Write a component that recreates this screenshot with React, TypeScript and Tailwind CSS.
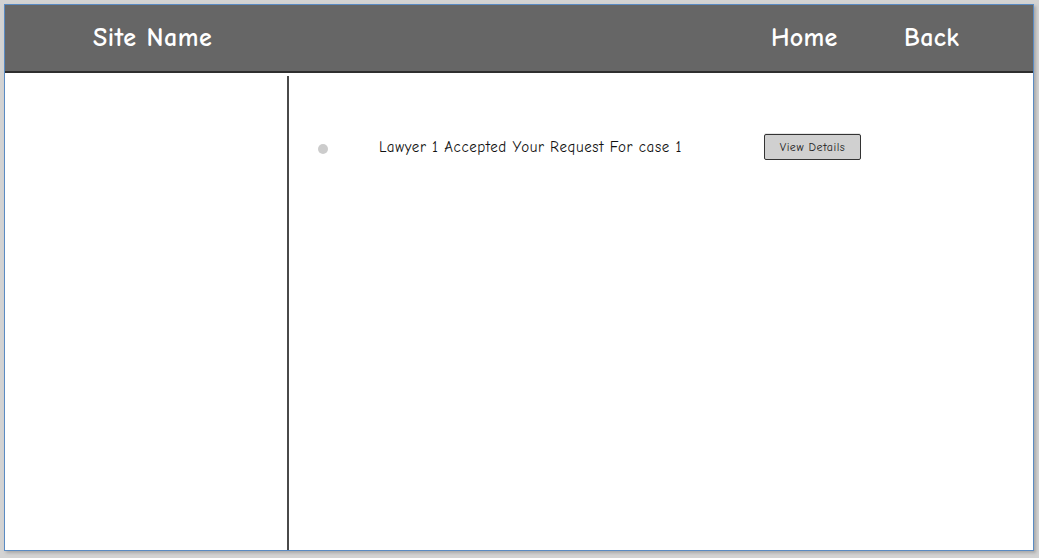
const font = {
  fontFamily: '"Comic Sans MS", "Comic Neue", "Liberation Sans", sans-serif',
};

function Header() {
  return (
    <header className="flex h-[68px] items-center border-b-2 border-[#2e2e2e] bg-[#666666] text-white">
      <div className="w-[766px] pl-[88px] text-[26px] font-semibold tracking-[0.6px]">
        Site Name
      </div>
      <nav className="flex items-center text-[26px] font-semibold tracking-[0.3px]">
        <span className="w-[133px]">Home</span>
        <span>Back</span>
      </nav>
    </header>
  );
}

function Notification() {
  return (
    <div className="flex items-center pt-[58px]">
      <span className="ml-[29px] mt-[3px] size-[10px] rounded-full bg-[#cccccc]" />
      <p className="ml-[51px] w-[385px] text-[15px] tracking-[0.6px] text-[#111111]">
        Lawyer 1 Accepted Your Request For case 1
      </p>
      <button
        type="button"
        className="flex h-[26px] w-[97px] items-center justify-center rounded-[2px] border border-[#333333] bg-[#d0d0d0] text-[12px] tracking-[0.5px] text-[#222222] shadow-[0_-1px_0_#e6e6e6]"
      >
        View Details
      </button>
    </div>
  );
}

export default function App() {
  return (
    <div className="h-[558px] w-[1039px] bg-[#d3d3d3] pl-[4px] pt-[4px]" style={font}>
      <div className="flex h-[547px] w-[1030px] flex-col border border-[#5a8bc3] bg-white shadow-[2px_2px_3px_#a8a8a8]">
        <Header />
        <div className="flex flex-1 pt-[3px]">
          <aside className="w-[284px] border-r-2 border-[#4a4a4a]" />
          <main className="flex-1">
            <Notification />
          </main>
        </div>
      </div>
    </div>
  );
}
